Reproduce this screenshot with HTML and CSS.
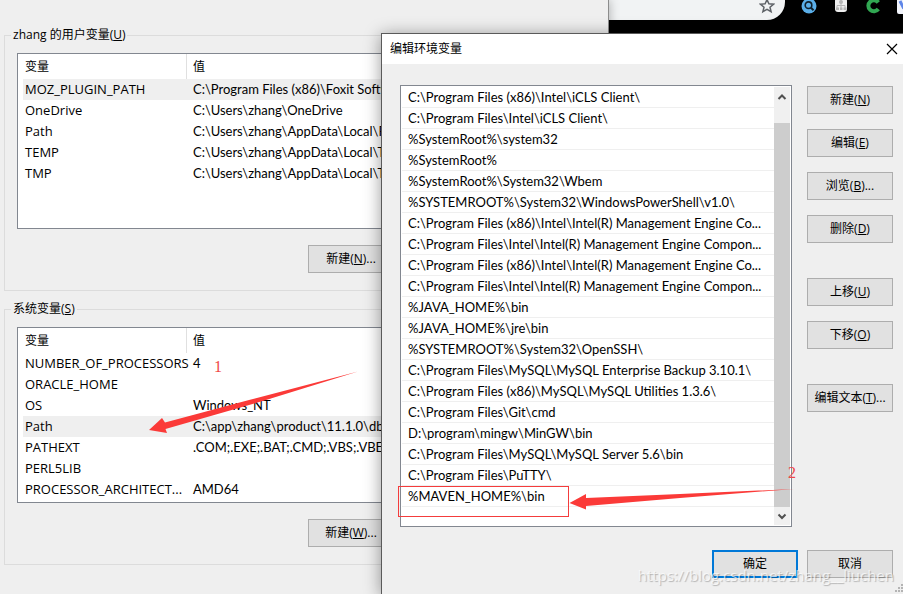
FILE: index.html
```html
<!DOCTYPE html>
<html lang="zh-CN">
<head>
<meta charset="utf-8">
<title>编辑环境变量</title>
<link rel="stylesheet" href="styles.css">
</head>
<body>
<main class="desktop">
  <div class="browser" aria-hidden="true">
    <div class="omnibox">
      <svg class="star" width="16" height="16" viewBox="0 0 16 16"><path d="M8 1.600l1.900 4.200 4.600.4-3.500 3 1.100 4.500L8 11.300l-4.100 2.400L5 9.200l-3.500-3 4.600-.4z" fill="none" stroke="#5f6368" stroke-width="1.500"/></svg>
    </div>
    <div class="extensions">
      <svg width="16" height="16" viewBox="0 0 16 16"><circle cx="8" cy="8" r="7.500" fill="#5aaee8"/><circle cx="7.500" cy="7.200" r="3.300" fill="none" stroke="#10202c" stroke-width="1.600"/><path d="M10 9.700l2.500 2.500" stroke="#10202c" stroke-width="2"/></svg>
      <svg width="16" height="16" viewBox="0 0 16 16"><rect x="2" y="0" width="12" height="14" rx="3" fill="#eee"/><path d="M8 2v9M4 7.500h8M4 7.500V10M12 7.500V10" fill="none" stroke="#b4b4b4"/><circle cx="8" cy="4" r="2" fill="#b4b4b4"/><path d="M3 9.500h3v2.500H3zM7 9.500h2.500v2.500H7zM10.500 9.500h3v2.500h-3z" fill="#b4b4b4"/></svg>
      <svg width="16" height="16" viewBox="0 0 16 16"><path d="M13.300 4.500A5.500 5.500 0 1 0 13.300 11" fill="none" stroke="#31a752" stroke-width="4"/></svg>
      <svg width="16" height="16" viewBox="0 0 16 16"><rect width="16" height="16" rx="2" fill="#f2f4fb"/><path d="M3 3l3 6 5-4" fill="none" stroke="#5f86e8" stroke-width="3"/></svg>
    </div>
  </div>

  <section class="window env">
    <fieldset>
      <legend>zhang 的用户变量(<u>U</u>)</legend>
      <div class="listbox">
        <table>
          <colgroup><col class="name"><col></colgroup>
          <thead><tr><th>变量</th><th>值</th></tr></thead>
          <tbody>
            <tr class="selected"><td>MOZ_PLUGIN_PATH</td><td>C:\Program Files (x86)\Foxit Softw</td></tr>
            <tr><td>OneDrive</td><td>C:\Users\zhang\OneDrive</td></tr>
            <tr><td>Path</td><td>C:\Users\zhang\AppData\Local\P</td></tr>
            <tr><td>TEMP</td><td>C:\Users\zhang\AppData\Local\T</td></tr>
            <tr><td>TMP</td><td>C:\Users\zhang\AppData\Local\T</td></tr>
          </tbody>
        </table>
      </div>
      <div class="actions"><button type="button">新建(<u>N</u>)...</button></div>
    </fieldset>
    <fieldset>
      <legend>系统变量(<u>S</u>)</legend>
      <div class="listbox">
        <table>
          <colgroup><col class="name"><col></colgroup>
          <thead><tr><th>变量</th><th>值</th></tr></thead>
          <tbody>
            <tr><td>NUMBER_OF_PROCESSORS</td><td>4</td></tr>
            <tr><td>ORACLE_HOME</td><td></td></tr>
            <tr><td>OS</td><td>Windows_NT</td></tr>
            <tr class="selected"><td>Path</td><td>C:\app\zhang\product\11.1.0\db</td></tr>
            <tr><td>PATHEXT</td><td>.COM;.EXE;.BAT;.CMD;.VBS;.VBE;.</td></tr>
            <tr><td>PERL5LIB</td><td></td></tr>
            <tr><td>PROCESSOR_ARCHITECT...</td><td>AMD64</td></tr>
          </tbody>
        </table>
      </div>
      <div class="actions"><button type="button">新建(<u>W</u>)...</button></div>
    </fieldset>
  </section>

  <section class="window dialog" role="dialog" aria-labelledby="dialog-title">
    <header class="titlebar">
      <h1 id="dialog-title">编辑环境变量</h1>
      <button type="button" class="close" aria-label="关闭"><svg width="12" height="12" viewBox="0 0 12 12"><path d="M1 1l10 10M11 1L1 11" stroke="#000" stroke-width="1.200"/></svg></button>
    </header>
    <div class="body">
      <div class="paths">
        <ul>
          <li>C:\Program Files (x86)\Intel\iCLS Client\</li>
          <li>C:\Program Files\Intel\iCLS Client\</li>
          <li>%SystemRoot%\system32</li>
          <li>%SystemRoot%</li>
          <li>%SystemRoot%\System32\Wbem</li>
          <li>%SYSTEMROOT%\System32\WindowsPowerShell\v1.0\</li>
          <li>C:\Program Files (x86)\Intel\Intel(R) Management Engine Co...</li>
          <li>C:\Program Files\Intel\Intel(R) Management Engine Compon...</li>
          <li>C:\Program Files (x86)\Intel\Intel(R) Management Engine Co...</li>
          <li>C:\Program Files\Intel\Intel(R) Management Engine Compon...</li>
          <li>%JAVA_HOME%\bin</li>
          <li>%JAVA_HOME%\jre\bin</li>
          <li>%SYSTEMROOT%\System32\OpenSSH\</li>
          <li>C:\Program Files\MySQL\MySQL Enterprise Backup 3.10.1\</li>
          <li>C:\Program Files (x86)\MySQL\MySQL Utilities 1.3.6\</li>
          <li>C:\Program Files\Git\cmd</li>
          <li>D:\program\mingw\MinGW\bin</li>
          <li>C:\Program Files\MySQL\MySQL Server 5.6\bin</li>
          <li>C:\Program Files\PuTTY\</li>
          <li>%MAVEN_HOME%\bin</li>
        </ul>
        <div class="scrollbar" aria-hidden="true">
          <svg width="16" height="18" viewBox="0 0 16 18"><path d="M4.500 12L8 8.500l3.500 3.500" fill="none" stroke="#505050" stroke-width="2"/></svg>
          <div class="thumb"></div>
          <svg width="16" height="18" viewBox="0 0 16 18"><path d="M4.500 7.500L8 11l3.500-3.500" fill="none" stroke="#505050" stroke-width="2"/></svg>
        </div>
      </div>
      <div class="side">
        <button type="button">新建(<u>N</u>)</button>
        <button type="button">编辑(<u>E</u>)</button>
        <button type="button">浏览(<u>B</u>)...</button>
        <button type="button">删除(<u>D</u>)</button>
        <button type="button" class="apart">上移(<u>U</u>)</button>
        <button type="button">下移(<u>O</u>)</button>
        <button type="button" class="apart">编辑文本(<u>T</u>)...</button>
      </div>
    </div>
    <footer class="confirm">
      <button type="button" class="default">确定</button>
      <button type="button">取消</button>
    </footer>
    <svg class="grip" width="8" height="10" viewBox="0 0 8 10" fill="#b4b4b4"><path d="M6 0h2v2H6zM3 3h2v2H3zM6 3h2v2H6zM0 6h2v2H0zM3 6h2v2H3zM6 6h2v2H6z"/></svg>
  </section>

  <svg class="marks" width="903" height="594" viewBox="0 0 903 594" aria-hidden="true">
    <path d="M358 371.500L249 400 165 422.500 162 418 149 430 167 433 165.500 429 266 400z" fill="#fb3a38"/>
    <path d="M794 489L680 494 586 498V494L569.500 503 586 509.500V506L680 498z" fill="#fb3a38"/>
    <rect x="398.500" y="486.500" width="170" height="30" fill="none" stroke="#f43c3c"/>
  </svg>
  <span class="step one">1</span>
  <span class="step two">2</span>
  <span class="watermark">https://blog.csdn.net/zhang__liuchen</span>
</main>
</body>
</html>
```
FILE: styles.css
```css
* { box-sizing: border-box; }

body {
  margin: 0;
  font: 12px/16px "Open Sans", "Noto Sans CJK SC", sans-serif;
  color: #000;
}

.desktop {
  position: relative;
  min-height: 100vh;
  overflow: hidden;
  background: #000;
}

.browser {
  display: flex;
  gap: 16px;
  height: 20px;
  padding-left: 608px;
  overflow: hidden;
}

.omnibox {
  display: flex;
  justify-content: flex-end;
  flex: 0 0 177px;
  padding-right: 10px;
  background: #f1f3f4;
  border-bottom-right-radius: 18px;
}

.star { margin-top: -2px; }

.extensions {
  display: flex;
  gap: 16px;
  margin-top: -2px;
}

.extensions svg { flex: none; }

.window {
  position: absolute;
  background: #efefef;
}

.env {
  top: 0;
  bottom: 0;
  left: 0;
  width: 609px;
  padding: 27px 12px 0 4px;
  border-right: 1px solid #8c8c8c;
  box-shadow: 0 0 10px rgba(0, 0, 0, .3);
}

fieldset {
  min-width: 0;
  margin: 0 0 10px;
  padding: 10px 13px 17px 12px;
  border: 1px solid #dcdcdc;
}

legend {
  margin-left: -6px;
  padding: 0 2px;
}

.listbox {
  height: 176px;
  padding: 0 5px;
  overflow: hidden;
  background: #fff;
  border: 1px solid #828790;
}

table {
  width: 100%;
  table-layout: fixed;
  border-spacing: 0;
}

.name { width: 164px; }

th, td {
  height: 21px;
  padding: 0 2px 2px;
  text-align: left;
  font-weight: 400;
  white-space: nowrap;
}

td { font-size: 13px; }

th {
  height: 25px;
  padding-bottom: 0;
}

th:first-child { border-right: 1px solid #e0e0e0; }

td + td, th + th { padding-left: 6px; }

td + td { font-family: Lato, sans-serif; }

.selected { background: #efefef; }

button {
  height: 28px;
  padding: 0;
  font: inherit;
  color: #000;
  background: #e1e1e1;
  border: 1px solid #adadad;
}

.actions {
  display: grid;
  grid-template-columns: 86px 86px 86px;
  gap: 8px;
  justify-content: end;
  margin-top: 16px;
}

.dialog {
  top: 33px;
  right: 0;
  bottom: 0;
  left: 381px;
  border: solid #5a5a5a;
  border-width: 1px 0 0 1px;
  box-shadow: 0 2px 16px rgba(0, 0, 0, .4);
}

.titlebar {
  display: flex;
  align-items: center;
  justify-content: space-between;
  height: 30px;
  padding: 0 5px 0 8px;
  background: #fff;
}

h1 {
  margin: 0;
  font: inherit;
}

.close {
  display: flex;
  align-items: center;
  background: none;
  border: 0;
}

.body {
  display: grid;
  grid-template-columns: minmax(0, 1fr) 86px;
  gap: 15px;
  padding: 21px 10px 0 18px;
}

.paths {
  display: flex;
  height: 442px;
  padding: 1px;
  background: #fff;
  border: 1px solid #828790;
}

ul {
  flex: 1;
  min-width: 0;
  margin: 0;
  padding: 0;
  list-style: none;
  font: 13px/20px Lato, sans-serif;
}

li {
  height: 21px;
  padding-left: 6px;
  white-space: nowrap;
  border-bottom: 1px solid #efefef;
}

.scrollbar {
  display: flex;
  flex-direction: column;
  width: 16px;
  background: #f0f0f0;
}

.thumb {
  flex: 1;
  margin-top: 18px;
  background: #cdcdcd;
}

.side {
  display: flex;
  flex-direction: column;
  gap: 15px;
  padding-top: 1px;
}

.apart { margin-top: 20px; }

.confirm {
  display: grid;
  grid-template-columns: 86px 86px;
  gap: 9px;
  justify-content: end;
  padding: 23px 10px 0;
}

.default { border: 2px solid #0078d7; }

.grip {
  position: absolute;
  right: 0;
  bottom: 0;
}

.marks {
  position: absolute;
  top: 0;
  left: 0;
}

.step {
  position: absolute;
  font: 16px/20px "Liberation Serif", serif;
  color: #f04848;
}

.one { top: 357px; left: 214px; }

.two { top: 463px; left: 788px; }

.watermark {
  position: absolute;
  right: 9px;
  bottom: 7px;
  font: 15px/24px "Open Sans", sans-serif;
  color: rgba(255, 255, 255, .7);
  text-shadow: 1px 1px 1px rgba(0, 0, 0, .25);
}
```
